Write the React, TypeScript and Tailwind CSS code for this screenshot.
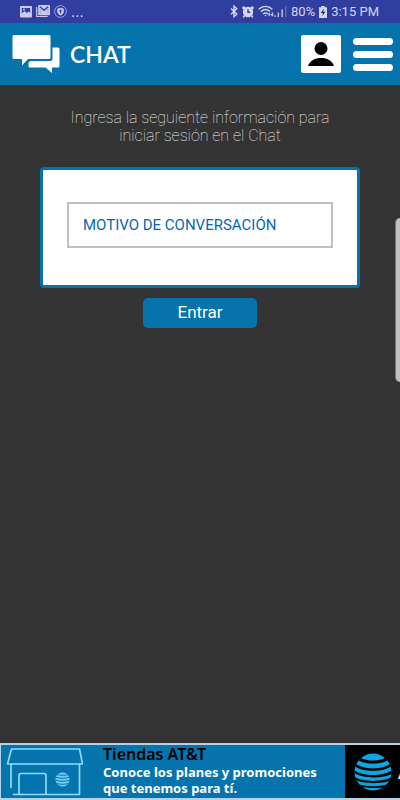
import React from "react";

const roboto = "font-['Roboto',sans-serif]";

function PictureIcon() {
  return (
    <svg width="12" height="12" viewBox="0 0 12 12" aria-hidden="true">
      <rect width="12" height="11.5" rx="1" fill="#c9cbe8" />
      <path d="M1.8 2h8.4v4.8L8.6 5.4 6.8 7 4.4 5 1.8 7.4z" fill="#303f9f" />
      <circle cx="4" cy="3.6" r="1" fill="#c9cbe8" />
    </svg>
  );
}

function MailIcon() {
  return (
    <svg width="14" height="13" viewBox="0 0 14 13" aria-hidden="true">
      <path d="M.7 2v9.500h11" fill="none" stroke="#c9cbe8" strokeWidth="1.200" />
      <rect x="2.200" y="0" width="11.800" height="10.200" rx="1" fill="#c9cbe8" />
      <path d="M4 1.800 8.100 5.300 12.200 1.800" fill="none" stroke="#303f9f" strokeWidth="1.400" />
      <path d="M4.300 4v5M11.900 4v5" stroke="#8d93cc" strokeWidth="0.700" />
    </svg>
  );
}

function ShieldIcon() {
  return (
    <svg width="13" height="13" viewBox="0 0 13 13" aria-hidden="true">
      <circle cx="6.5" cy="6.5" r="5.9" fill="none" stroke="#a5abda" strokeWidth="0.9" />
      <path d="M6.5 2.7 9.8 3.8v2.5c0 2-1.4 3.4-3.3 4.2C4.6 9.7 3.2 8.3 3.2 6.3V3.8z" fill="#c9cbe8" />
      <path d="M6.5 4.5a1.3 1.3 0 0 1 .5 2.4v1.5H6V6.9a1.3 1.3 0 0 1 .5-2.4z" fill="#303f9f" />
    </svg>
  );
}

function BluetoothIcon() {
  return (
    <svg width="8" height="13" viewBox="0 0 8 13" aria-hidden="true">
      <path d="M1 3.500 6.800 9.100 4 11.700V1l2.800 2.700L1 9.300" fill="none" stroke="#d3d6ee" strokeWidth="1.400" />
    </svg>
  );
}

function AlarmIcon() {
  return (
    <svg width="12" height="12" viewBox="0 0 12 12" aria-hidden="true">
      <circle cx="6" cy="6" r="5.200" fill="#d3d6ee" />
      <circle cx="1.800" cy="1.800" r="1.600" fill="#d3d6ee" />
      <circle cx="10.200" cy="1.800" r="1.600" fill="#d3d6ee" />
      <path d="M2.500 9.500 1.300 11.500M9.500 9.500l1.200 2" stroke="#d3d6ee" strokeWidth="1.500" />
      <path d="M6 3.300v3h2.200" fill="none" stroke="#303f9f" strokeWidth="1.400" />
    </svg>
  );
}

function WifiIcon() {
  return (
    <svg width="16" height="13" viewBox="0 0 15 12" aria-hidden="true">
      <g fill="none" stroke="#d3d6ee" strokeWidth="1.300">
        <path d="M.6 3.800C4.300.3 9.900.3 13.500 3.800" />
        <path d="M2.700 6.200c2.600-2.400 6-2.400 8.500-.3" />
        <path d="M4.700 8.400c1.500-1.300 3-1.300 4.400-.3" />
      </g>
      <path d="M6 9.300h2.200L7.100 10.800z" fill="#d3d6ee" />
      <path d="m9 8.800 1.400-1.800 1.400 1.800zM11.800 8.400h3L13.300 11zM10 8.500h.9v2H10zM13 6.500h.8v2H13z" fill="#d3d6ee" />
    </svg>
  );
}

function SignalIcon() {
  return (
    <svg width="13" height="13" viewBox="0 0 12 12" aria-hidden="true">
      <path d="M1 9.500V11M4 7v4M7.500 4v7" stroke="#c9cbe8" strokeWidth="1.200" />
      <path d="M10.800 1v10" stroke="#6470bb" strokeWidth="1.200" />
    </svg>
  );
}

function BatteryIcon() {
  return (
    <svg width="8" height="12" viewBox="0 0 8 12" aria-hidden="true">
      <path d="M2.300 0h3.400v1.300H8V12H0V1.300h2.300z" fill="#d3d6ee" />
      <path d="M4.700 2.800 1.800 7h2l-.4 3L6.300 5.800h-2z" fill="#202a70" />
    </svg>
  );
}

function ChatIcon() {
  return (
    <svg width="48" height="38" viewBox="0 0 48 38" aria-hidden="true">
      <path
        d="M2 0h35a1.500 1.500 0 0 1 1.500 1.500v21A1.500 1.500 0 0 1 37 24H16l-6 6.500V24H2a1.500 1.500 0 0 1-1.500-1.500v-21A1.500 1.500 0 0 1 2 0z"
        fill="#fff"
      />
      <path
        d="M40.500 12.500H46a1.500 1.500 0 0 1 1.500 1.500v17a1.500 1.500 0 0 1-1.500 1.500h-6V38l-6.500-5.500H18a1.500 1.500 0 0 1-1.500-1.500v-3.500l2-1.500h20a2 2 0 0 0 2-2z"
        fill="#fff"
      />
    </svg>
  );
}

function PersonIcon() {
  return (
    <svg width="26" height="24" viewBox="0 0 26 24" aria-hidden="true">
      <circle cx="13" cy="6.500" r="6.500" fill="#000" />
      <path d="M0 24c2-5.500 7-8 13-8s11 2.500 13 8z" fill="#000" />
    </svg>
  );
}

function StoreIcon() {
  return (
    <svg className="shrink-0" width="78" height="52" viewBox="0 0 78 52" aria-hidden="true">
      <g fill="none" stroke="#8bdcfa" strokeWidth="1.700" strokeLinejoin="round" strokeLinecap="round">
        <path d="M6.500 3h68l3 15H2.500z" />
        <path d="M6 18v23.500M74.500 18v30.500H8.500" />
        <path d="M14 48V29.500a2 2 0 0 1 2-2h23a2 2 0 0 1 2 2V48" />
      </g>
      <clipPath id="store-globe">
        <circle cx="57.500" cy="33.500" r="7" />
      </clipPath>
      <g clipPath="url(#store-globe)">
        <rect x="50" y="26" width="15" height="15" fill="#6fd0f6" />
        <path
          d="M50 28q7.500 2.500 15 0M50 31q7.500 2.500 15 0M50 34q7.500 2.500 15 0M50 37q7.500 2.500 15 0"
          fill="none"
          stroke="#0574ad"
          strokeWidth="1.100"
        />
      </g>
    </svg>
  );
}

function GlobeIcon() {
  return (
    <svg className="shrink-0" width="38" height="38" viewBox="0 0 38 38" aria-hidden="true">
      <clipPath id="globe">
        <circle cx="19" cy="19" r="18.500" />
      </clipPath>
      <g clipPath="url(#globe)">
        <rect width="38" height="38" fill="#0aa5e2" />
        <path d="M6 4.500C8 1.500 13 0 19 0H0v9zM32 4.500C30 1.500 25 0 19 0h19v9z" fill="#000" />
        <g fill="#000">
          <path d="M5 3C9 9 29 9 33 3l2 3C30 12 8 12 3 6z" />
          <path d="M0 9C7 17.500 31 17.500 38 9v3.500C31 19.500 7 19.500 0 12.500z" />
          <path d="M-1 16C6 24 32 24 39 16v4C32 26 6 26-1 19z" />
          <path d="M-1 23C6 29.500 32 29.500 39 23v3.500C32 31.500 6 31.500-1 25.500z" />
          <path d="M1 29.500C8 34.500 30 34.500 37 29.500l-1 3C29 36 9 36 2 31.500z" />
        </g>
      </g>
    </svg>
  );
}

export default function App() {
  return (
    <div className={`relative flex min-h-screen flex-col bg-[#333333] ${roboto}`}>
      <div className="flex h-[23px] items-center justify-between bg-[#303f9f] pr-[21px] pl-5 text-[#d3d6ee]">
        <div className="flex items-center gap-1">
          <PictureIcon />
          <MailIcon />
          <ShieldIcon />
          <span className="text-base leading-5">...</span>
        </div>
        <div className="flex items-center gap-1 text-[13px] leading-5">
          <BluetoothIcon />
          <AlarmIcon />
          <div className="flex items-center">
            <WifiIcon />
            <SignalIcon />
          </div>
          <span>80%</span>
          <BatteryIcon />
          <span>3:15 PM</span>
        </div>
      </div>

      <header className="flex h-[62px] items-center justify-between bg-[#0574ad] pr-[7px] pl-3 text-white">
        <div className="flex items-center gap-[10px]">
          <ChatIcon />
          <h1 className="font-['Lato',sans-serif] text-[23px] leading-8 font-semibold">CHAT</h1>
        </div>
        <div className="flex items-center gap-3">
          <button type="button" aria-label="Perfil" className="flex h-[38px] w-10 items-center justify-center rounded-xs bg-white">
            <PersonIcon />
          </button>
          <button type="button" aria-label="Menú" className="flex w-10 flex-col gap-[6px]">
            <span className="h-[7px] w-full rounded-full bg-white" />
            <span className="h-[7px] w-full rounded-full bg-white" />
            <span className="h-[7px] w-full rounded-full bg-white" />
          </button>
        </div>
      </header>

      <main className="flex grow flex-col px-10 pt-6">
        <p className="px-6 text-center text-base leading-[18px] font-thin text-[#f0f0f0]">
          Ingresa la seguiente información para iniciar sesión en el Chat
        </p>
        <form className="mt-[22px] flex flex-col items-center" onSubmit={(e) => e.preventDefault()}>
          <div className="w-full rounded-[4px] border-3 border-[#0574ad] bg-white px-6 pt-8 pb-[37px]">
            <input
              type="text"
              aria-label="Motivo de conversación"
              placeholder="MOTIVO DE CONVERSACIÓN"
              className="block h-[46px] w-full border-2 border-[#bfbfbf] px-[14px] text-[15px] text-[#0568ae] placeholder:text-[#0568ae]"
            />
          </div>
          <button type="submit" className="mt-[10px] rounded-[5px] bg-[#0574ad] px-[34px] pt-px pb-[3px] text-[17px] leading-[26px] text-white">
            Entrar
          </button>
        </form>
      </main>

      <footer>
        <a
          href="#tiendas"
          className="flex h-[57px] overflow-hidden border-y-2 border-l border-[#b5d3e4] bg-[#0574ad] font-['Noto_Sans',sans-serif]"
        >
          <div className="flex min-w-0 grow items-center gap-5 pl-1">
            <StoreIcon />
            <div className="whitespace-nowrap pb-1 text-[13px] leading-4 font-bold text-white">
              <p className="text-base leading-5 font-semibold text-black">Tiendas AT&amp;T</p>
              <p>Conoce los planes y promociones</p>
              <p>que tenemos para tí.</p>
            </div>
          </div>
          <div className="flex w-[55px] shrink-0 items-center gap-[6px] overflow-hidden bg-black pl-[9px] text-xl text-white">
            <GlobeIcon />
            <span>A</span>
          </div>
        </a>
      </footer>

      <div className="absolute top-[218px] right-0 h-[164px] w-[5px] rounded-l-[5px] border-l border-[#777777] bg-[#c0c0c0]" />
    </div>
  );
}
